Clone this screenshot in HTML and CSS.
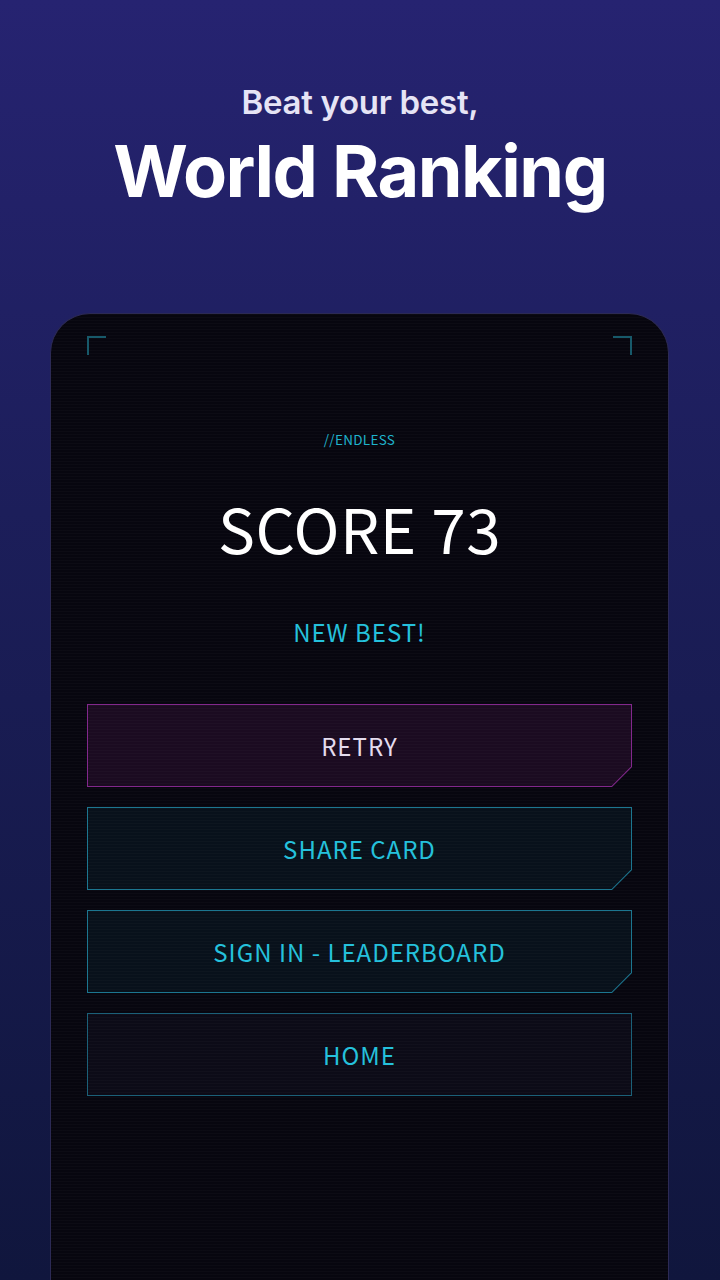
FILE: index.html
```html
<!DOCTYPE html>
<html lang="en">
<head>
<meta charset="utf-8">
<title>World Ranking</title>
<link rel="stylesheet" href="styles.css">
</head>
<body>
<div class="page">
  <header class="hero">
    <p class="hero-sub">Beat your best,</p>
    <h1 class="hero-title">World Ranking</h1>
  </header>
  <main class="device">
    <span class="bracket bracket-tl"></span>
    <span class="bracket bracket-tr"></span>
    <section class="result">
      <p class="mode">//ENDLESS</p>
      <p class="score">SCORE 73</p>
      <p class="best">NEW BEST!</p>
      <div class="actions">
        <button class="btn btn-retry"><span>RETRY</span></button>
        <button class="btn btn-teal"><span>SHARE CARD</span></button>
        <button class="btn btn-teal"><span>SIGN IN - LEADERBOARD</span></button>
        <button class="btn btn-home"><span>HOME</span></button>
      </div>
    </section>
  </main>
</div>
</body>
</html>
```
FILE: styles.css
```css
* { box-sizing: border-box; }
html, body { margin: 0; padding: 0; }
body {
  width: 720px;
  height: 1280px;
  overflow: hidden;
  background: linear-gradient(180deg, #262371 0%, #1c1e5a 40%, #10163d 100%);
  font-family: "Noto Sans CJK SC", "Noto Sans", sans-serif;
}
.page {
  height: 1280px;
  display: flex;
  flex-direction: column;
}
.hero {
  padding-top: 80px;
  text-align: center;
  font-family: Inter, "Noto Sans", sans-serif;
}
.hero-sub {
  margin: 0;
  font-size: 33px;
  line-height: 44px;
  font-weight: 600;
  color: #e6e4f5;
  letter-spacing: -0.3px;
}
.hero-title {
  margin: 0;
  margin-top: 5px;
  font-size: 72px;
  line-height: 84px;
  font-weight: 700;
  color: #ffffff;
  letter-spacing: -1.5px;
}
.device {
  position: relative;
  margin: 100px 51px 0 50px;
  flex: 1;
  border: 1px solid #2c2a55;
  border-bottom: none;
  border-radius: 40px 40px 0 0;
  background-color: #07060f;
  background-image: repeating-linear-gradient(180deg, rgba(255,255,255,0.018) 0px, rgba(255,255,255,0.018) 1px, transparent 1px, transparent 3px);
  padding: 0 36px;
}
.bracket {
  position: absolute;
  top: 22px;
  width: 19px;
  height: 19px;
  border-top: 2px solid #17596a;
}
.bracket-tl { left: 36px; border-left: 2px solid #17596a; }
.bracket-tr { right: 36px; border-right: 2px solid #17596a; }
.result {
  display: flex;
  flex-direction: column;
  align-items: center;
  padding-top: 115px;
}
.mode {
  margin: 0;
  font-size: 13.5px;
  line-height: 20px;
  color: #1fb3cc;
  letter-spacing: 0.3px;
}
.score {
  margin: 38px 0 0;
  font-size: 62px;
  line-height: 80px;
  font-weight: 400;
  color: #ffffff;
  letter-spacing: 0.5px;
}
.best {
  margin: 50px 0 0;
  font-size: 24px;
  line-height: 30px;
  color: #25c1dc;
  letter-spacing: 1px;
}
.actions {
  align-self: stretch;
  margin-top: 57px;
  display: flex;
  flex-direction: column;
  gap: 20px;
}
.btn {
  position: relative;
  height: 83px;
  border: none;
  padding: 0;
  display: flex;
  align-items: center;
  justify-content: center;
  font-family: "Noto Sans CJK SC", "Noto Sans", sans-serif;
  font-size: 24px;
  letter-spacing: 1px;
  background: var(--edge);
  clip-path: polygon(0 0, 100% 0, 100% calc(100% - 20px), calc(100% - 20px) 100%, 0 100%);
}
.btn::before {
  content: "";
  position: absolute;
  inset: 1px;
  background-color: var(--fill);
  background-image: repeating-linear-gradient(180deg, rgba(255,255,255,0.02) 0px, rgba(255,255,255,0.02) 1px, transparent 1px, transparent 3px);
  clip-path: polygon(0 0, 100% 0, 100% calc(100% - 19.4px), calc(100% - 19.4px) 100%, 0 100%);
}
.btn span { position: relative; }
.btn-retry { --edge: #82288c; --fill: #1b0b21; color: #e4dcee; }
.btn-teal { --edge: #1c7690; --fill: #08111b; color: #25c1dc; }
.btn-home {
  --edge: #1b6078; --fill: #0c0b17; color: #25c1dc;
  clip-path: none;
}
.btn-home::before { clip-path: none; }
```
